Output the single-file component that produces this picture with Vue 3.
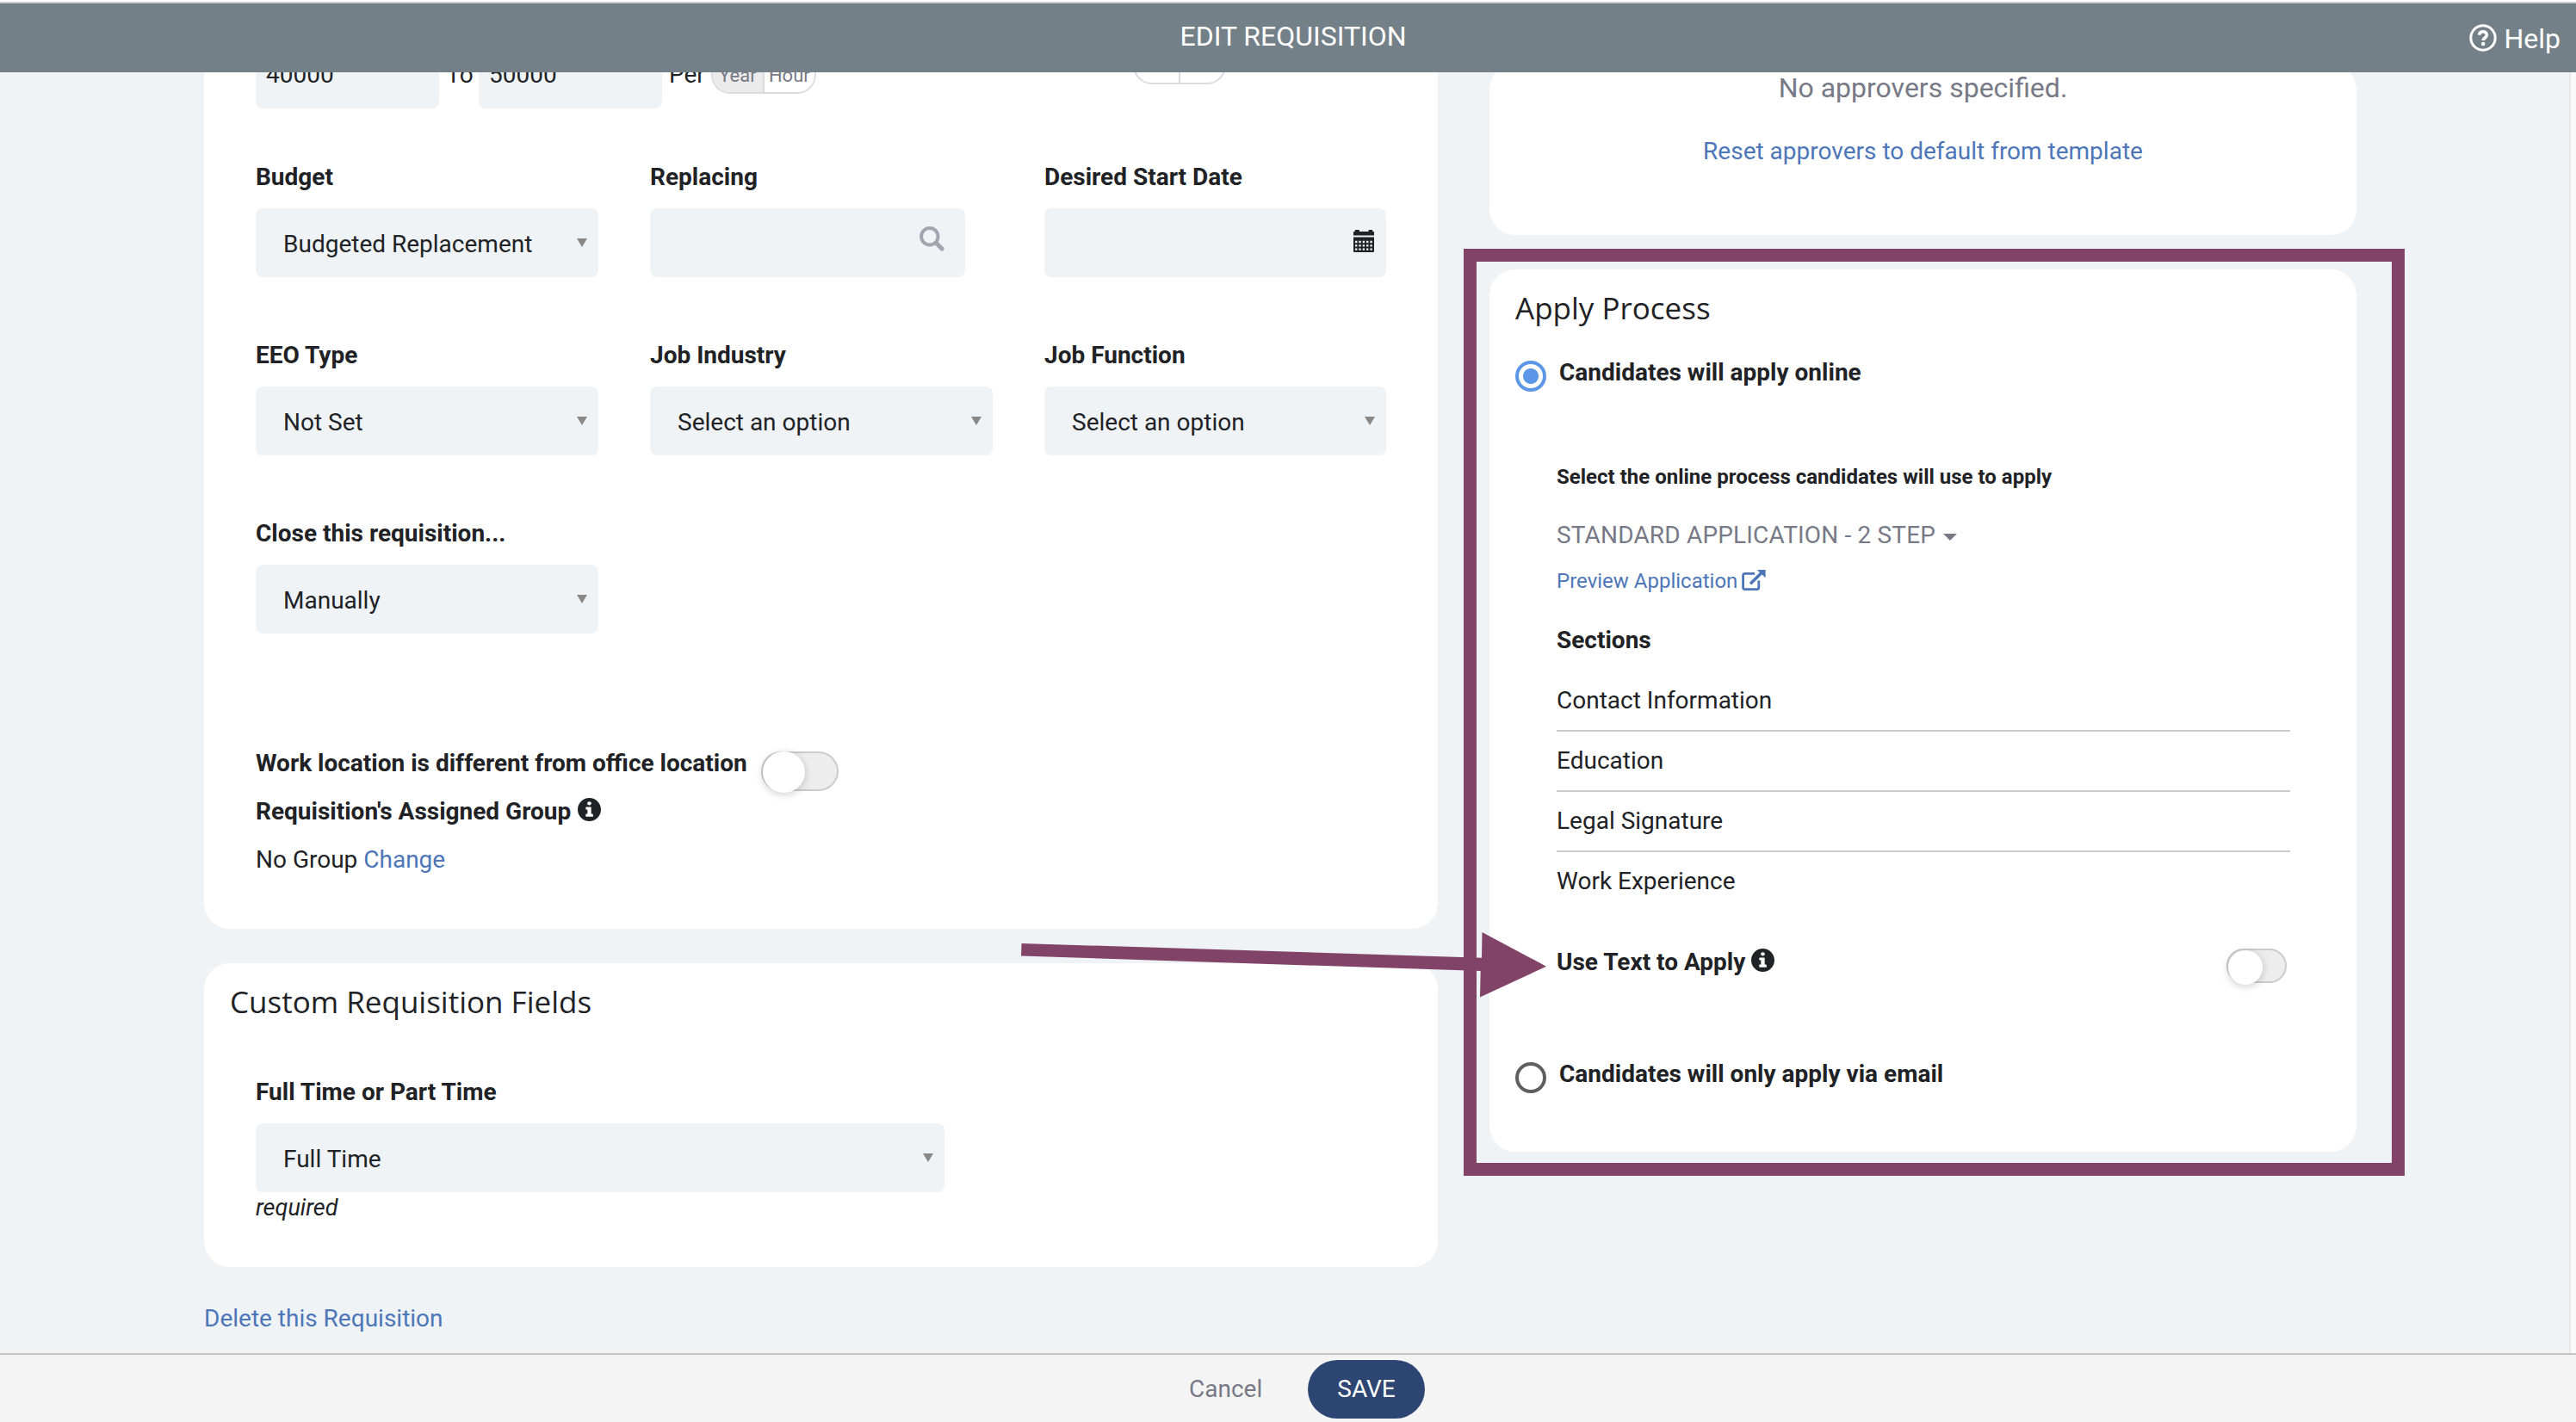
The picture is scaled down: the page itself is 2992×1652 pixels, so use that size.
<template>
  <div class="page">
    <header class="topbar">
      <span class="topbar-title">EDIT REQUISITION</span>
      <a class="help">
        <svg class="help-icon" viewBox="0 0 32 32">
          <circle cx="16" cy="16" r="14.2" fill="none" stroke="#fff" stroke-width="3" />
          <path
            d="M11.4 12.6C11.9 10 13.5 8.8 16 8.8c2.6 0 4.400 1.500 4.400 3.800 0 3.400-4.200 3.400-4.200 6.400"
            fill="none"
            stroke="#fff"
            stroke-width="3.6"
          />
          <circle cx="16.2" cy="23" r="2.2" fill="#fff" />
        </svg>
        <span>Help</span>
      </a>
    </header>

    <main class="content">
      <div class="left-column">
        <section class="card form-card">
          <div class="salary-row">
            <div class="salary-input">40000</div>
            <span class="salary-to">To</span>
            <div class="salary-input">50000</div>
            <span class="salary-per">Per</span>
            <div class="switch-group">
              <span class="switch-option active">Year</span>
              <span class="switch-option">Hour</span>
            </div>
            <div class="switch-group blank">
              <span class="switch-option"></span>
              <span class="switch-option"></span>
            </div>
          </div>

          <div class="field-grid">
            <div v-for="field in fields" :key="field.label" class="field">
              <label class="label">{{ field.label }}</label>
              <div :class="['control', field.type]">
                <span>{{ field.value }}</span>
                <i v-if="field.type === 'select'" class="arrow"></i>
                <svg v-else-if="field.type === 'search'" class="search-icon" viewBox="0 0 30 30">
                  <circle cx="11.8" cy="11.8" r="9.7" fill="none" stroke="#a2a5af" stroke-width="4" />
                  <path d="M19.5 19.5l6.600 6.600" stroke="#a2a5af" stroke-width="5" stroke-linecap="round" />
                </svg>
                <svg v-else class="calendar-icon" viewBox="0 0 24 26">
                  <path d="M0 3q0-1 1-1h.6V1q0-1 1-1H6q1 0 1 1v1h10.500V1q0-1 1-1h2.800q1 0 1 1v1h.7q1 0 1 1v3.500H0z" />
                  <path d="M0 8.500h24V25q0 1-1 1H1q-1 0-1-1z" />
                  <path
                    d="M2 14h20M2 18.400h20M2 22.700h20"
                    stroke="#eff3f6"
                    stroke-width="2.300"
                    stroke-dasharray="2.400 1.950"
                  />
                </svg>
              </div>
            </div>
          </div>

          <div class="office">
            <div class="line bold">
              Work location is different from office location
              <span class="toggle large"><i class="knob"></i></span>
            </div>
            <div class="line bold">
              Requisition's Assigned Group
              <svg class="info-icon" viewBox="8 8 496 496"><path :d="infoPath" /></svg>
            </div>
            <div class="line">No Group&nbsp;<a class="link">Change</a></div>
          </div>
        </section>

        <section class="card custom-card">
          <h2 class="card-title">Custom Requisition Fields</h2>
          <div class="field custom-field">
            <label class="label">Full Time or Part Time</label>
            <div class="control select">
              <span>Full Time</span>
              <i class="arrow"></i>
            </div>
            <em class="required">required</em>
          </div>
        </section>

        <a class="link delete-link">Delete this Requisition</a>
      </div>

      <div class="right-column">
        <section class="card approvers-card">
          <p class="no-approvers">No approvers specified.</p>
          <a class="link reset-link">Reset approvers to default from template</a>
        </section>

        <section class="card apply-card">
          <h2 class="card-title">Apply Process</h2>
          <div class="radio-row">
            <i class="radio checked"></i>
            <span>Candidates will apply online</span>
          </div>
          <div class="process">
            <p class="process-hint">Select the online process candidates will use to apply</p>
            <div class="process-name">STANDARD APPLICATION - 2 STEP<i class="caret"></i></div>
            <a class="link preview-link">
              Preview Application
              <svg class="external-icon" viewBox="0 0 28 24">
                <path
                  d="M15 4.400H3.600Q1.600 4.400 1.600 6.400V20.600Q1.600 22.600 3.600 22.600H17.800Q19.800 22.600 19.800 20.600V12.500"
                  fill="none"
                  stroke="#4d76b8"
                  stroke-width="2.800"
                />
                <path d="M10 16.200L23.500 3" stroke="#4d76b8" stroke-width="3.600" />
                <path d="M17.800 0H27.600V9.200z" fill="#4d76b8" />
              </svg>
            </a>
            <h3 class="sections-title">Sections</h3>
            <ul class="sections">
              <li v-for="section in sections" :key="section">{{ section }}</li>
            </ul>
            <div class="text-apply">
              <span>Use Text to Apply</span>
              <svg class="info-icon" viewBox="8 8 496 496"><path :d="infoPath" /></svg>
              <span class="toggle"><i class="knob"></i></span>
            </div>
          </div>
          <div class="radio-row email-row">
            <i class="radio"></i>
            <span>Candidates will only apply via email</span>
          </div>
        </section>
      </div>

      <div class="scroll-track"></div>
    </main>

    <footer class="footer">
      <a class="cancel">Cancel</a>
      <button class="save">SAVE</button>
    </footer>

    <!-- highlight frame and arrow over the apply card -->
    <div class="highlight"></div>
    <svg class="pointer" viewBox="0 0 612 80">
      <path d="M.5 15L535 31.700 535.500 2l74.500 39.700L533 77.500l.7-30.500L0 29.500z" fill="#814367" />
    </svg>
  </div>
</template>

<script setup>
const fields = [
  { label: "Budget", type: "select", value: "Budgeted Replacement" },
  { label: "Replacing", type: "search", value: "" },
  { label: "Desired Start Date", type: "date", value: "" },
  { label: "EEO Type", type: "select", value: "Not Set" },
  { label: "Job Industry", type: "select", value: "Select an option" },
  { label: "Job Function", type: "select", value: "Select an option" },
  { label: "Close this requisition...", type: "select", value: "Manually" },
];

const sections = ["Contact Information", "Education", "Legal Signature", "Work Experience"];

const infoPath =
  "M256 8C119 8 8 119 8 256s111 248 248 248 248-111 248-248S393 8 256 8zm0 76c25 0 44 17 44 40s-19 40-44 40-44-17-44-40 19-40 44-40zm82 312c0 7-5 12-12 12H190c-7 0-12-5-12-12v-34c0-7 5-12 12-12h26v-92h-24c-7 0-12-5-12-12v-34c0-7 5-12 12-12h92c7 0 12 5 12 12v138h26c7 0 12 5 12 12z";
</script>

<style>
body {
  margin: 0;
}
</style>

<style scoped>
.page {
  position: relative;
  display: flex;
  flex-direction: column;
  width: 2992px;
  height: 1652px;
  overflow: hidden;
  background: #eff3f6;
  color: #202226;
  font-family: Roboto, "Liberation Sans", sans-serif;
  font-size: 28px;
  line-height: 56px;
}

/* white strip above the bar */
.page::before {
  content: "";
  flex: none;
  height: 2px;
  background: #fff;
}

.topbar {
  flex: none;
  box-sizing: border-box;
  display: grid;
  grid-template-columns: 1fr auto 1fr;
  height: 82px;
  border-top: 2px solid #ccc;
  background: #748088;
  color: #fff;
  font-size: 32px;
  line-height: 76px;
}

.topbar-title {
  grid-column: 2;
  margin-left: 12px;
}

.help {
  display: flex;
  align-items: center;
  justify-content: flex-end;
  gap: 8px;
  padding-right: 18px;
  line-height: 82px;
}

.help-icon {
  width: 32px;
  height: 32px;
  margin-bottom: 2px;
}

.content {
  flex: none;
  display: flex;
  height: 1488px;
  padding-left: 237px;
  overflow: hidden;
}

.left-column {
  width: 1433px;
}

.right-column {
  width: 1007px;
  margin-left: 60px;
}

.scroll-track {
  box-sizing: border-box;
  width: 8px;
  margin-left: auto;
  border-left: 2px solid #e8e8e8;
  background: #fafafa;
}

.card {
  box-sizing: border-box;
  background: #fff;
  border-radius: 30px;
}

.card-title {
  margin: 0;
  font-family: "Open Sans", sans-serif;
  font-size: 35px;
  font-weight: 400;
}

.link {
  color: #4d76b8;
}

/* requisition form */
.form-card {
  height: 1033px;
  margin-top: -38px;
  padding: 0 60px;
}

.salary-row {
  display: flex;
  align-items: flex-start;
  height: 80px;
  line-height: 82px;
}

.salary-input {
  box-sizing: border-box;
  width: 213px;
  height: 80px;
  padding-left: 12px;
  border-radius: 8px;
  background: #eff3f6;
}

.salary-to {
  width: 46px;
  text-align: center;
  text-indent: 2px;
}

.salary-per {
  margin: 0 7px 0 8px;
}

.switch-group {
  box-sizing: border-box;
  display: flex;
  width: 122px;
  height: 44px;
  margin-top: 19px;
  border: 2px solid #dcdcdc;
  border-radius: 22px;
  overflow: hidden;
  color: #777986;
  font-size: 22px;
  line-height: 42px;
}

.switch-group.blank {
  width: 108px;
  margin: 8px 0 0 368px;
}

.switch-option {
  flex: 1;
  text-align: center;
}

.switch-option + .switch-option {
  border-left: 2px solid #dcdcdc;
}

.switch-option.active {
  background: #ebebeb;
}

.field-grid {
  display: grid;
  grid-template-columns: 398px 398px 397px;
  gap: 63px 60px;
  margin-top: 52px;
}

.label {
  display: block;
  margin-bottom: 8px;
  font-weight: 700;
}

.control {
  box-sizing: border-box;
  display: flex;
  align-items: center;
  justify-content: space-between;
  height: 80px;
  padding: 4px 13px 0 32px;
  border-radius: 8px;
  background: #eff3f6;
}

.control.search {
  width: 366px;
}

.arrow {
  margin-bottom: 4px;
  border: 6px solid transparent;
  border-top: 10px solid #888;
  border-bottom: 0;
}

.search-icon {
  width: 30px;
  height: 30px;
  margin: 0 10px 12px 0;
}

.calendar-icon {
  width: 24px;
  height: 26px;
  margin: 0 1px 8px 0;
  fill: #202226;
}

.office {
  margin-top: 123px;
}

.line {
  display: flex;
  align-items: center;
  height: 56px;
}

.bold {
  font-weight: 700;
}

.info-icon {
  width: 27px;
  height: 27px;
  margin: 0 0 6px 8px;
  fill: #202226;
}

.toggle {
  box-sizing: border-box;
  width: 70px;
  height: 40px;
  border: 2px solid #ccc;
  border-radius: 20px;
  background: #ededed;
}

.knob {
  display: block;
  width: 40px;
  height: 40px;
  border-radius: 50%;
  background: #fff;
  box-shadow: 0 2px 10px rgba(0, 0, 0, 0.2);
}

.toggle.large {
  width: 90px;
  height: 46px;
  margin: 18px 0 0 16px;
  border-radius: 23px;
}

.large .knob {
  width: 49px;
  height: 48px;
  margin-top: -2px;
}

/* custom fields */
.custom-card {
  height: 353px;
  margin-top: 40px;
  padding: 17px 60px 0 30px;
}

.custom-field {
  width: 800px;
  margin: 49px 0 0 30px;
}

.required {
  display: block;
  font-size: 27px;
  line-height: 36px;
}

.delete-link {
  display: block;
  margin-top: 32px;
}

/* approvers */
.approvers-card {
  height: 199px;
  margin-top: -10px;
  text-align: center;
}

.no-approvers {
  margin: 0 0 18px;
  color: #777986;
  font-size: 32px;
}

.reset-link {
  display: block;
}

/* apply process */
.apply-card {
  height: 1025px;
  margin-top: 40px;
  padding: 17px 77px 0 30px;
}

.radio-row {
  display: flex;
  align-items: center;
  height: 56px;
  margin-top: 19px;
  font-weight: 700;
}

.radio {
  box-sizing: border-box;
  width: 36px;
  height: 36px;
  margin: 8px 15px 0 0;
  border: 4px solid #5f5f5f;
  border-radius: 50%;
}

.radio.checked {
  border-color: #5c96e6;
  background: radial-gradient(circle, #5c96e6 8.5px, transparent 9.5px);
}

.process {
  padding: 65px 0 0 48px;
}

.process-hint {
  margin: 0;
  font-size: 24px;
  font-weight: 700;
}

.process-name {
  display: flex;
  align-items: center;
  margin-top: 12px;
  color: #777986;
  letter-spacing: 0.17px;
}

.caret {
  margin: 4px 0 0 9px;
  border: 8px solid transparent;
  border-top-color: #777986;
  border-bottom: 0;
}

.preview-link {
  display: flex;
  align-items: center;
  font-size: 24px;
  line-height: 51px;
}

.external-icon {
  width: 28px;
  height: 24px;
  margin: 0 0 3px 5px;
}

.sections-title {
  margin: 15px 0 8px;
  font-size: 28px;
  font-weight: 700;
}

.sections {
  margin: 0;
  padding: 0;
  list-style: none;
}

.sections li {
  box-sizing: border-box;
  height: 70px;
  border-bottom: 2px solid #ccc;
  line-height: 68px;
}

.sections li:last-child {
  border-bottom: 0;
}

.text-apply {
  display: flex;
  align-items: center;
  height: 56px;
  margin-top: 30px;
  font-weight: 700;
}

.text-apply .info-icon {
  margin-left: 7px;
}

.text-apply .toggle {
  margin: 8px 4px 0 auto;
}

.email-row {
  margin-top: 74px;
}

/* bottom bar */
.footer {
  flex: none;
  box-sizing: border-box;
  display: flex;
  align-items: flex-start;
  height: 80px;
  padding: 6px 0 0 1381px;
  border-top: 2px solid #c4c4c4;
  background: #f4f4f4;
}

.cancel {
  width: 138px;
  color: #777986;
  line-height: 68px;
}

.save {
  width: 136px;
  height: 68px;
  padding: 0;
  border: 0;
  border-radius: 34px;
  background: #2c4572;
  color: #fff;
  font: 28px/68px Roboto, sans-serif;
}

.highlight {
  position: absolute;
  top: 289px;
  left: 1700px;
  box-sizing: border-box;
  width: 1093px;
  height: 1077px;
  border: 15px solid #814367;
}

.pointer {
  position: absolute;
  top: 1081px;
  left: 1186px;
  width: 612px;
  height: 80px;
}
</style>
